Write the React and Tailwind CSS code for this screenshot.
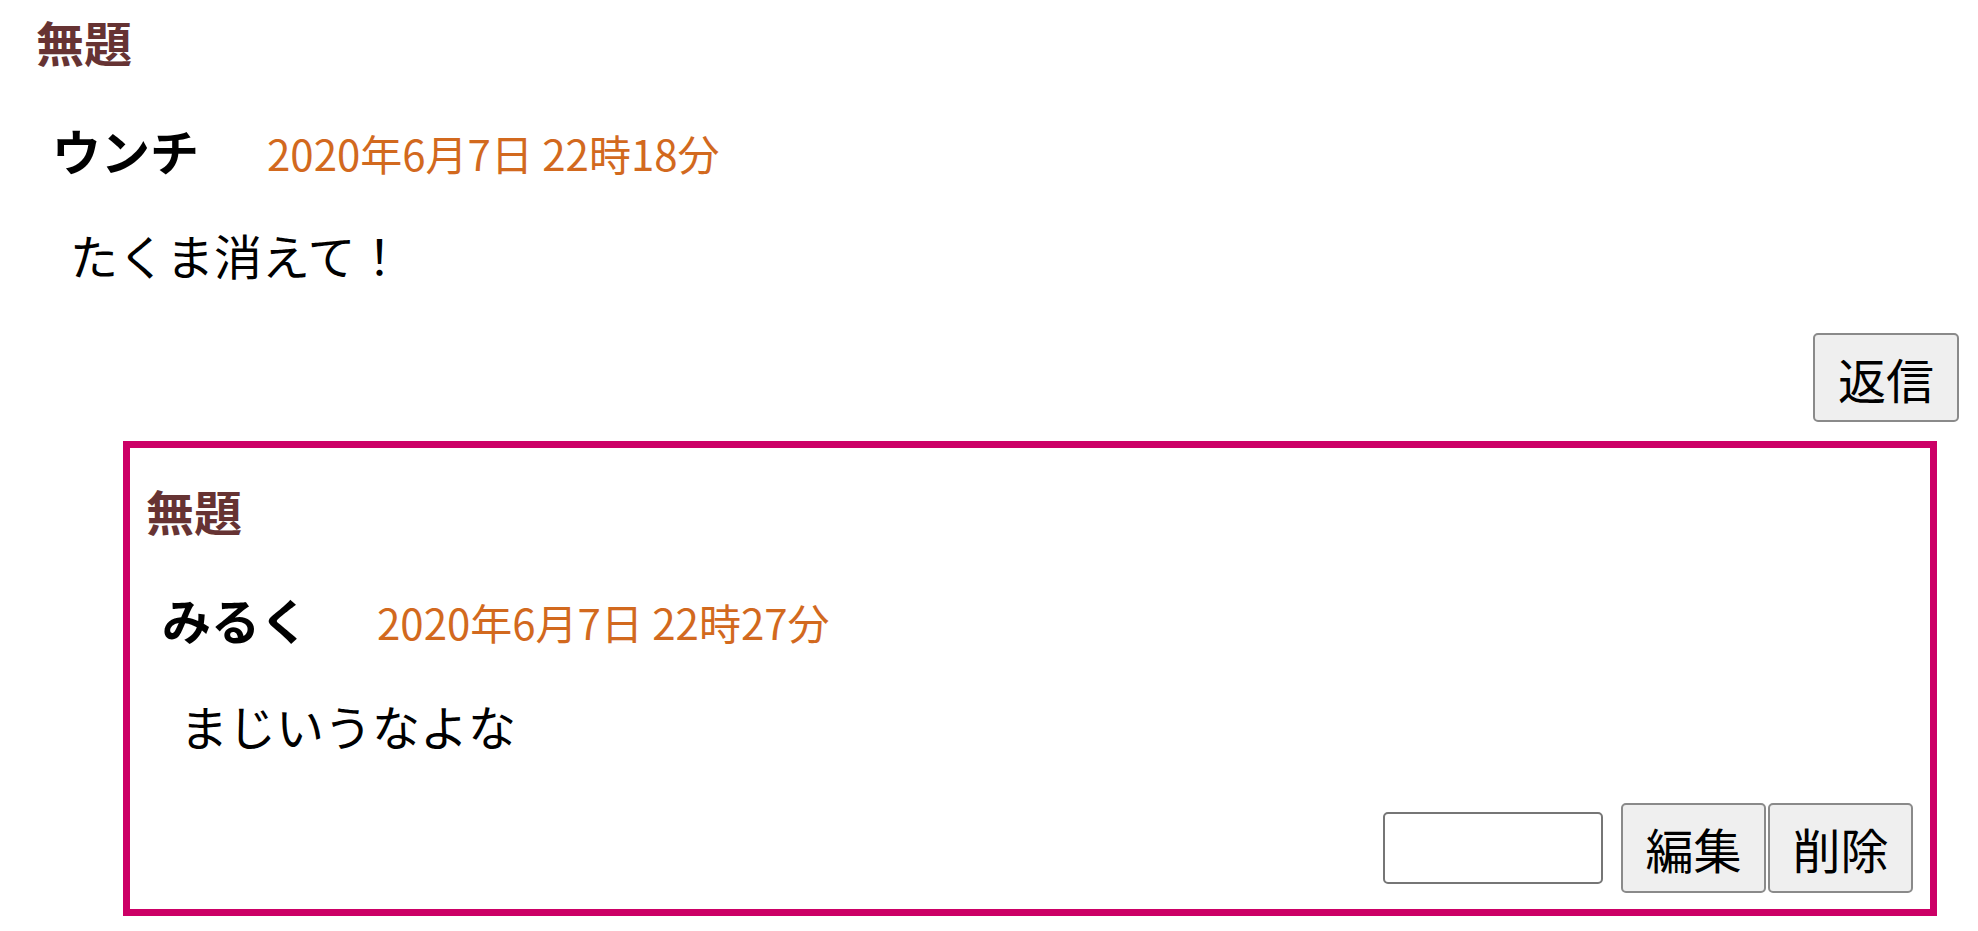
import React from "react";

const font = { fontFamily: '"Noto Sans CJK JP", "Noto Sans", sans-serif' };

function Button({ label, className = "" }) {
    return (
        <button className={`flex items-center justify-center bg-[#efefef] border-2 border-[#8a8a8a] rounded-[5px] text-[48px] leading-[48px] text-black ${className}`}>
            {label}
        </button>
    );
}

function CommentHead({ name, date }) {
    return (
        <>
            <p className="text-[48px] leading-[48px] font-bold text-[#663333]">無題</p>

            <div className="flex items-baseline h-[48px] mt-[61px] pl-[16px]">
                <span className="text-[49px] leading-[48px] font-bold text-black">{name}</span>
                <span className="ml-[68px] text-[42px] leading-[48px] text-[#d2691e]">{date}</span>
            </div>
        </>
    );
}

export default function App() {
    return (
        <div className="min-h-screen w-full bg-white pl-[36px] pr-[19px] pt-[17px]" style={font}>
            <CommentHead name="ウンチ" date="2020年6月7日 22時18分" />

            <p className="mt-[56px] pl-[34px] text-[48px] leading-[48px] text-black">たくま消えて！</p>

            <div className="flex justify-end mt-[55px]">
                <Button label="返信" className="w-[146px] h-[89px]" />
            </div>

            {/* reply */}
            <div className="mt-[19px] ml-[87px] mr-[22px] border-[7px] border-[#cc0066] pl-[16px] pr-[17px] pt-[38px] pb-[16px]">
                <CommentHead name="みるく" date="2020年6月7日 22時27分" />

                <p className="mt-[58px] pl-[34px] text-[48px] leading-[48px] text-black">まじいうなよな</p>

                <div className="flex justify-end items-center mt-[54px]">
                    <input type="text" className="w-[220px] h-[72px] border-2 border-[#767676] rounded-[5px] bg-white" />
                    <Button label="編集" className="ml-[18px] w-[145px] h-[90px]" />
                    <Button label="削除" className="ml-[2px] w-[145px] h-[90px]" />
                </div>
            </div>
        </div>
    );
}
